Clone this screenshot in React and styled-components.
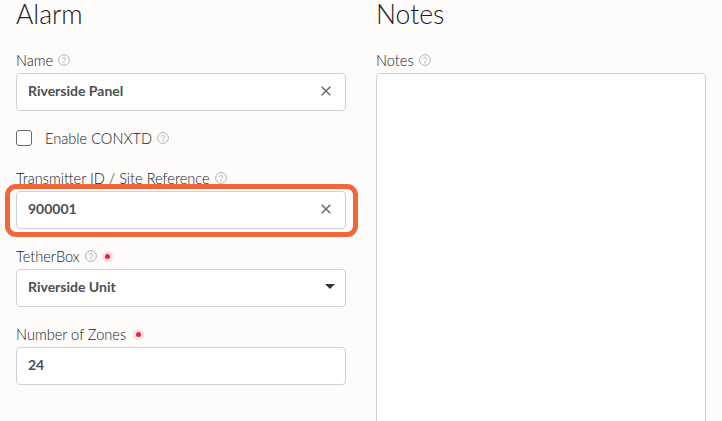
import React from 'react'
import styled, { createGlobalStyle } from 'styled-components'

const GlobalStyle = createGlobalStyle`
  html, body {
    margin: 0;
    padding: 0;
    height: 421px;
    overflow: hidden;
    background: #fdfcfb;
    font-family: "Lato", "Liberation Sans", sans-serif;
  }
`

const Page = styled.div`
  display: grid;
  grid-template-columns: 330px 330px;
  column-gap: 30px;
  padding: 0 16px;
  height: 421px;
  overflow: hidden;
`

const Column = styled.section`
  display: flex;
  flex-direction: column;
`

const Heading = styled.h2`
  margin: 0 0 17px;
  height: 33px;
  font-size: 26.5px;
  line-height: 29px;
  font-weight: 300;
  color: #1d2025;
`

const Field = styled.div`
  position: relative;
  display: flex;
  flex-direction: column;
  margin-bottom: 17px;
`

const Label = styled.label`
  display: flex;
  align-items: center;
  height: 20px;
  margin-bottom: 3px;
  font-size: 14.6px;
  font-weight: 300;
  color: #15181c;
`

const Box = styled.div`
  display: flex;
  align-items: center;
  justify-content: space-between;
  box-sizing: border-box;
  height: 38px;
  padding: 0 12px 3px 11px;
  background: #fff;
  border: 1px solid #ccd2da;
  border-radius: 4px;
  font-size: 14px;
  font-weight: 700;
  color: #4a4f56;
`

const NotesBox = styled(Box)`
  height: 400px;
`

const CheckRow = styled.div`
  display: flex;
  align-items: center;
  height: 20px;
  margin-bottom: 20px;
  font-size: 14.6px;
  font-weight: 300;
  color: #15181c;
`

const Checkbox = styled.span`
  box-sizing: border-box;
  width: 16px;
  height: 16px;
  margin-right: 13px;
  background: #fff;
  border: 1px solid #666a70;
  border-radius: 3px;
`

const Highlight = styled.div`
  position: absolute;
  left: -11px;
  right: -12px;
  top: 16px;
  height: 53px;
  box-sizing: border-box;
  border: 5px solid #f0683a;
  border-radius: 11px;
  pointer-events: none;
`

const RequiredDot = styled.span`
  display: inline-block;
  width: 5px;
  height: 5px;
  margin-left: ${props => props.$gap}px;
  background: #e2263f;
  border-radius: 50%;
  box-shadow: 0 0 0 3px #fbdfe2;
`

const Caret = styled.span`
  width: 0;
  height: 0;
  margin-right: -2px;
  border-left: 5px solid transparent;
  border-right: 5px solid transparent;
  border-top: 5px solid #33363b;
`

const HelpSvg = styled.svg`
  width: 12px;
  height: 12px;
  margin-left: 5px;
  flex: none;
`

const ClearSvg = styled.svg`
  width: 10px;
  height: 10px;
  margin-right: 2px;
`

const Help = () => (
  <HelpSvg viewBox="0 0 12 12" fill="none" stroke="#a9adb1" strokeWidth="0.9">
    <circle cx="6" cy="6" r="5.4" />
    <path d="M4.5 4.7a1.5 1.5 0 1 1 2.3 1.3c-.5.3-.8.6-.8 1.1" strokeLinecap="round" />
    <circle cx="6" cy="8.8" r="0.35" />
  </HelpSvg>
)

const Clear = () => (
  <ClearSvg viewBox="0 0 10 10" fill="none" stroke="#5f646a" strokeWidth="1.4">
    <path d="M.7.7l8.6 8.6M9.3.7L.7 9.3" />
  </ClearSvg>
)

export default function App() {
  return (
    <>
      <GlobalStyle />
      <Page>
        <Column>
          <Heading>Alarm</Heading>
          <Field>
            <Label>Name<Help /></Label>
            <Box>Riverside Panel<Clear /></Box>
          </Field>
          <CheckRow>
            <Checkbox />
            Enable CONXTD<Help />
          </CheckRow>
          <Field>
            <Label>Transmitter ID / Site Reference<Help /></Label>
            <Box>900001<Clear /></Box>
            <Highlight />
          </Field>
          <Field>
            <Label>TetherBox<Help /><RequiredDot $gap={8} /></Label>
            <Box>Riverside Unit<Caret /></Box>
          </Field>
          <Field>
            <Label>Number of Zones<RequiredDot $gap={10} /></Label>
            <Box>24</Box>
          </Field>
        </Column>
        <Column>
          <Heading>Notes</Heading>
          <Field>
            <Label>Notes<Help /></Label>
            <NotesBox />
          </Field>
        </Column>
      </Page>
    </>
  )
}
